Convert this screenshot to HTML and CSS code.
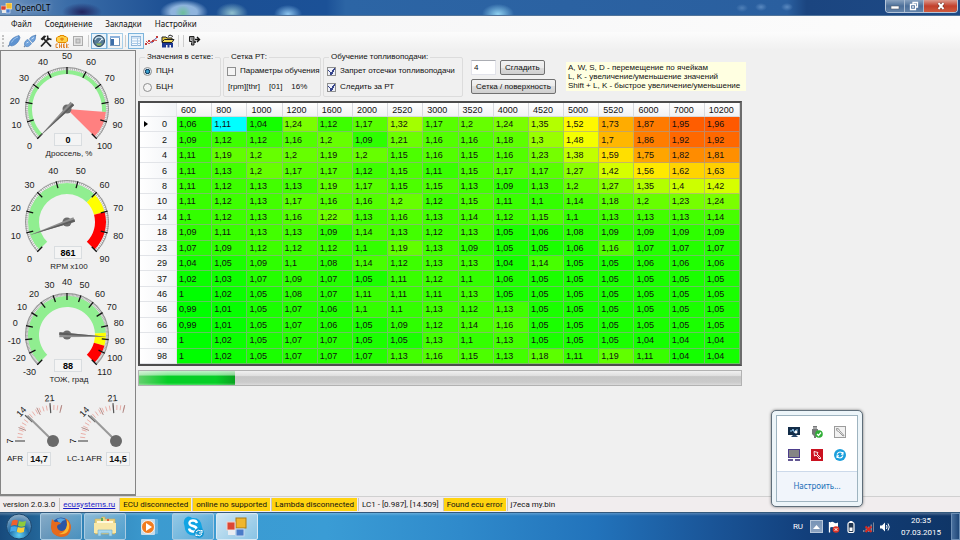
FILE: index.html
```html
<!DOCTYPE html>
<html lang="ru">

<head>
  <meta charset="UTF-8" />
  <meta name="viewport" content="width=device-width, initial-scale=1.0" />
  <title>OpenOLT</title>
  <link rel="stylesheet" href="styles.css">
</head>

<body>
  <header class="titlebar">
    <svg class="app-icon" width="11" height="11" viewBox="0 0 11 11">
      <rect x="5" y="0" width="6" height="6" fill="#f5bd2a" stroke="#fff3c4" stroke-width=".6" />
      <rect x="0" y="3" width="5" height="4" fill="#d8412f" stroke="#f6d5cf" stroke-width=".6" />
      <rect x="5" y="6" width="4" height="4" fill="#4a7fd0" stroke="#dce8fa" stroke-width=".6" />
      <rect x="1" y="7" width="4" height="3" fill="#e8e8e8" />
    </svg>
    <h1>OpenOLT</h1>
    <div class="window-buttons">
      <button type="button" aria-label="Свернуть"><svg width="12" height="10" viewBox="0 0 12 10"><rect x="2" y="5" width="8" height="3" fill="#fff" stroke="#55606e" stroke-width=".6" /></svg></button>
      <button type="button" aria-label="Развернуть"><svg width="10" height="10" viewBox="0 0 10 10"><path d="M4 4V1.500H8.500V6H6.500M1.500 3.500H6.500V8.500H1.500Z" fill="none" stroke="#fff" stroke-width="1.300" /><rect x="3.200" y="5.200" width="1.600" height="1.600" fill="#fff" /></svg></button>
      <button type="button" class="close" aria-label="Закрыть"><svg width="10" height="10" viewBox="0 0 10 10"><path d="M2.500 2L7.500 8M7.500 2L2.500 8" stroke="#5a2a22" stroke-width="3" /><path d="M2.500 2L7.500 8M7.500 2L2.500 8" stroke="#fff" stroke-width="2" /></svg></button>
    </div>
  </header>

  <nav class="menubar">
    <button type="button">Файл</button>
    <button type="button">Соединение</button>
    <button type="button">Закладки</button>
    <button type="button">Настройки</button>
  </nav>

  <div class="toolbar">
    <span class="grip"></span>
    <button type="button" aria-label="Подключить">
      <svg width="14" height="14" viewBox="0 0 14 14"><path d="M1 12.500L3.500 10" stroke="#6b86a8" stroke-width="1.200" /><path d="M2.500 10.500C2 7 6 3 12 1.500L13 3.500C12 8 8 12 4 12Z" fill="#5e93d1" stroke="#4a7ab5" stroke-width=".6" /><path d="M4.500 8.500C6 5.500 8.500 3.800 11 3" stroke="#a4c8ee" fill="none" /></svg>
    </button>
    <button type="button" aria-label="Отключить">
      <svg width="14" height="14" viewBox="0 0 14 14"><path d="M1 13L3 11M11.500 2.500L13 1" stroke="#6b86a8" stroke-width="1.200" /><path d="M1.500 11C1 8 3 6 5 5.500L8.500 9.500C7 12 5 13 3 12.500Z" fill="#6fa2dc" stroke="#4a7ab5" stroke-width=".6" /><path d="M6.500 5C7.500 3 9.500 1.500 12.500 1.500C13 5 11.500 7.500 9.500 8.500Z" fill="#6fa2dc" stroke="#4a7ab5" stroke-width=".6" /><path d="M3.500 9L5.500 8M8.500 5L11 3.500" stroke="#cfe2f7" /></svg>
    </button>
    <button type="button" aria-label="Инструменты">
      <svg width="14" height="14" viewBox="0 0 14 14"><path d="M2 12.500L9.500 4.500M4.500 4.500L12 12.500" stroke="#222" stroke-width="1.800" /><path d="M1.500 5L5 1.500L7.500 2L3.500 6.500Z" fill="#222" /><path d="M8.500 1.500L9 4.500L12.500 5.500M8 4L10 6" stroke="#222" stroke-width="1.500" fill="none" /></svg>
    </button>
    <button type="button" aria-label="Ошибки">
      <svg width="14" height="14" viewBox="0 0 14 14"><path d="M3 2.500H5V1.500H9V2.500H11L12.500 4V7L11 8.500H3L1.500 7V4Z" fill="#ffd24a" stroke="#e58a00" /><path d="M5 5H9M7 3.500V7" stroke="#e07600" /><path d="M1 10V13.500M1 10H3M1 13.500H3M4.500 9.500V14M4.500 12H6.500M6.500 9.500V14M8.500 10V13.500M8.500 10H10M8.500 12H10M8.500 13.500H10M11.500 9.500V14M13.500 10L11.500 12L13.500 14" stroke="#e07a1a" stroke-width=".9" fill="none" /></svg>
    </button>
    <button type="button" aria-label="Остановить">
      <svg width="14" height="14" viewBox="0 0 14 14"><rect x="2.500" y="2.500" width="9" height="9" fill="#e6e6e6" stroke="#ababab" /><rect x="5" y="5" width="4" height="4" fill="#cfcfcf" stroke="#a8a8a8" /></svg>
    </button>
    <span class="sep"></span>
    <button type="button" class="on" aria-label="Приборы">
      <svg width="14" height="14" viewBox="0 0 14 14"><circle cx="7" cy="7" r="5.500" fill="#557a96" stroke="#2b4256" /><path d="M3 6A4.200 4.200 0 0 1 11 6" fill="none" stroke="#c9e0ee" stroke-width="1.300" /><path d="M7 8.500L10 5" stroke="#fff" /><path d="M4 9.500H10L8.500 11.500H5.500Z" fill="#8fb55a" /></svg>
    </button>
    <button type="button" class="framed" aria-label="Панель">
      <svg width="14" height="14" viewBox="0 0 14 14"><rect x="2.500" y="2.500" width="9" height="9" fill="#fff" stroke="#7296bd" /><rect x="2" y="2" width="10" height="2" fill="#8db2dc" /><rect x="3" y="5" width="3" height="6" fill="#3d6ea8" /></svg>
    </button>
    <span class="sep"></span>
    <button type="button" class="on" aria-label="Сетка">
      <svg width="14" height="14" viewBox="0 0 14 14"><rect x="2.500" y="2.500" width="9" height="9" fill="#f5faff" stroke="#8eb4d8" /><path d="M2 4H12M2 7H12M2 9.500H12M8.500 4V12" stroke="#a9c9e6" /></svg>
    </button>
    <button type="button" aria-label="График">
      <svg width="14" height="14" viewBox="0 0 14 14"><path d="M1 10L4 7L7 9L10 5L13 3" stroke="#5b78c8" fill="none" /><path d="M1 7L4 10L8 6L12 6.500" stroke="#d6564e" fill="none" /><path d="M0 9h2v2h-2zM3 6h2v2h-2zM7 6h2v2h-2zM11 2h2v2h-2z" fill="#c23b3b" /></svg>
    </button>
    <button type="button" aria-label="Журнал">
      <svg width="14" height="14" viewBox="0 0 14 14"><path d="M1 8V3H5L6 4H11V6" fill="#e0c63c" stroke="#222" /><path d="M1 8L3.500 5.500H13L11 8.500H1Z" fill="#f2dc5a" stroke="#222" /><path d="M7 2.500L9 1L12 2.500" stroke="#222" fill="none" /><path d="M1 9H12V13.500H10V11H8.500V13.500H6.500V11H5V13.500H1Z" fill="#1c3691" /></svg>
    </button>
    <span class="sep"></span>
    <span class="sep"></span>
    <button type="button" aria-label="Выход">
      <svg width="14" height="14" viewBox="0 0 14 14"><path d="M2.500 2.500H7V11H4.500V8.500M2.500 2.500V7.500H5" stroke="#222" fill="#888" /><path d="M8 5.500H12M10 3L12.500 5.500L10 8M7 8H9" stroke="#111" stroke-width="1.400" fill="none" /></svg>
    </button>
  </div>

  <main class="workspace">
    <aside class="gauges">
      <svg class="gauge" id="throttle" viewBox="0 0 134 113"></svg>
      <svg class="gauge" id="rpm" viewBox="0 0 134 113"></svg>
      <svg class="gauge" id="coolant" viewBox="0 0 134 113"></svg>
      <svg class="afr" id="afr" viewBox="0 0 134 62"></svg>
      <div class="afr-values">
        <span>AFR</span><output>14,7</output>
        <span class="lc">LC-1 AFR</span><output>14,5</output>
      </div>
    </aside>

    <section class="editor">
      <form class="options">
        <fieldset class="values">
          <legend>Значения в сетке:</legend>
          <label><input type="radio" name="mode" checked>ПЦН</label>
          <label><input type="radio" name="mode">БЦН</label>
        </fieldset>
        <fieldset class="point">
          <legend>Сетка РТ:</legend>
          <label><input type="checkbox">Параметры обучения</label>
          <div class="point-info"><span>[rpm][thr]</span><span>[01]</span><span>16%</span></div>
        </fieldset>
        <fieldset class="learning">
          <legend>Обучение топливоподачи:</legend>
          <label><input type="checkbox" checked>Запрет отсечки топливоподачи</label>
          <label><input type="checkbox" checked>Следить за РТ</label>
        </fieldset>
        <div class="smooth">
          <div class="smooth-row">
            <input type="text" value="4" aria-label="Степень сглаживания">
            <button type="button">Сгладить</button>
          </div>
          <button type="button">Сетка / поверхность</button>
        </div>
        <p class="hint">A, W, S, D - перемещение по ячейкам<br>L, K - увеличение/уменьшение значений<br>Shift + L, K - быстрое увеличение/уменьшение</p>
      </form>

      <table class="grid">
        <thead>
          <tr id="gridHead"></tr>
        </thead>
        <tbody id="gridBody"></tbody>
      </table>

      <progress class="load" value="16" max="100" aria-label="Дроссель"></progress>
    </section>
  </main>

  <footer class="statusbar">
    <span>version 2.0.3.0</span>
    <span class="site"><a href="#">ecusystems.ru</a></span>
    <span class="warn">ECU disconnected</span>
    <span class="warn">online no supported</span>
    <span class="warn">Lambda disconnected</span>
    <span>LC1 - [0.987], [14.509]</span>
    <span class="warn">Found ecu error</span>
    <span>j7eca my.bin</span>
  </footer>

  <div class="taskbar">
    <button type="button" class="start" aria-label="Пуск">
      <svg width="28" height="27" viewBox="0 0 28 27">
        <defs>
          <radialGradient id="orb" cx=".5" cy=".85" r=".8">
            <stop offset="0" stop-color="#5fd0f5" />
            <stop offset=".5" stop-color="#1f6ba6" />
            <stop offset="1" stop-color="#89a9c4" />
          </radialGradient>
        </defs>
        <circle cx="14" cy="13.500" r="12.500" fill="url(#orb)" stroke="#1a456c" />
        <path d="M7 8Q10 6 13 7.500L12 12.500Q9 11.500 6 13Z" fill="#f0602c" />
        <path d="M14 8Q17 9.500 21 8L20 13Q16.500 14.500 13 12.800Z" fill="#8ecb3c" />
        <path d="M5.800 14Q9 12.500 12 13.700L11 18.500Q8 17.500 5 19Z" fill="#46a8ea" />
        <path d="M12.800 14Q16 15.500 19.800 14L18.800 19Q15 20.500 11.800 18.800Z" fill="#fccf36" />
      </svg>
    </button>
    <button type="button" class="task open" aria-label="Firefox">
      <svg width="24" height="24" viewBox="0 0 24 24"><circle cx="12" cy="12" r="9.500" fill="#2b56a5" /><path d="M8 4Q13 2 17 5Q13 5 12 8Q9 8 8 4Z" fill="#58a6e0" /><path d="M3 4L6 7Q10 6 12 9Q8 9 8 12Q9 16 13 16Q18 15 18 10Q18 6 16 3Q22 6 22 13Q21 22 12 22Q3 21 2 13Q2 8 3 4Z" fill="#e66a1c" /><path d="M18 5Q22 10 19 16Q16 20 10 19Q17 17 18 10Z" fill="#fbb62e" /></svg>
    </button>
    <button type="button" class="task open" aria-label="Проводник">
      <svg width="26" height="22" viewBox="0 0 26 22"><path d="M3 3H9L10 1H13V3H23V18H3Z" fill="#e9d384" stroke="#c9ac55" stroke-width=".6" /><path d="M5 5H21V14H5Z" fill="#fff9dc" /><path d="M2 7H24V17H2Z" fill="#f8e7a7" /><path d="M6 14H20V20H17V17H9V20H6Z" fill="#a8d7ee" stroke="#6bacd0" stroke-width=".6" /><path d="M9 2H11V5H9Z" fill="#5bab56" /><path d="M15 3H17V5H15Z" fill="#e05b3c" /></svg>
    </button>
    <button type="button" class="task" aria-label="Проигрыватель">
      <svg width="20" height="20" viewBox="0 0 20 20"><rect x="6" y="2" width="13" height="15" rx="1" fill="#78bce4" opacity=".7" /><rect x="2" y="2" width="14" height="16" rx="1" fill="#c4dcec" /><circle cx="9" cy="10" r="6.500" fill="#f07c1f" stroke="#fff" stroke-width=".8" /><path d="M7 6L13 10L7 14Z" fill="#fff" /></svg>
    </button>
    <button type="button" class="task open" aria-label="Skype">
      <svg width="24" height="24" viewBox="0 0 24 24"><path d="M7 1.500Q10 1.500 11 3Q20 2 21 12Q23 16 20 19.500Q17 22 14 20.500Q4 21 3.500 11Q1 4 7 1.500Z" fill="#10a4e4" /><path d="M16 8Q15 5 11.500 5.500Q8 6 8.500 8.500Q9 10.500 12 11Q16 12 15.500 14.500Q14.500 17 11.500 16.500Q8.500 16 8 13.500" fill="none" stroke="#fff" stroke-width="2.400" /><circle cx="18" cy="18" r="5" fill="#1597d4" /><path d="M15 17Q17 14 20 16L21 15V18H18M21 19Q19 22 16 20L15 21V18.500" fill="none" stroke="#fff" /></svg>
    </button>
    <button type="button" class="task active" aria-label="OpenOLT">
      <svg width="22" height="22" viewBox="0 0 22 22"><rect x="10" y="2" width="10" height="10" fill="#f0b62c" stroke="#a97b12" /><rect x="1" y="6" width="8" height="8" fill="#dc4733" stroke="#f4d2cc" /><rect x="2" y="14" width="7" height="5" fill="#e9edf2" /><rect x="10" y="13" width="8" height="7" fill="#4a7bc8" stroke="#c6d8ef" /></svg>
    </button>

    <div class="tray">
      <span class="lang">RU</span>
      <button type="button" class="tray-toggle" aria-label="Скрытые значки"><svg width="7" height="4" viewBox="0 0 7 4"><path d="M0 4L3.500 0L7 4Z" fill="#fff" /></svg></button>
      <svg width="12" height="12" viewBox="0 0 12 12"><path d="M1.500 1V11.500" stroke="#fff" stroke-width="1.300" /><path d="M2 1.500Q4.500 0 6 1.500T10 1.500V6.500Q8 7.500 6 6.500T2 6.500Z" fill="#fff" /><circle cx="8" cy="8.500" r="3.300" fill="#dc3527" /><path d="M6.700 7.200L9.300 9.800M9.300 7.200L6.700 9.800" stroke="#fff" /></svg>
      <svg width="12" height="12" viewBox="0 0 12 12"><rect x="4.500" y="0" width="3" height="2" fill="#fff" /><rect x="3" y="1.500" width="6" height="10" rx="1.500" fill="#203550" stroke="#fff" stroke-width="1.200" /><rect x="4.500" y="6.500" width="3" height="3.500" fill="#fff" /></svg>
      <svg width="12" height="12" viewBox="0 0 12 12"><path d="M1 9h1.500v2h-1.500zM3.500 7.500h1.500v3.500h-1.500zM6 5.500h1.500v5.500h-1.500zM8.500 3.500h1.500v7.500h-1.500zM11 1.500h1v9.500h-1z" fill="#7c8698" /><path d="M3.500 5.500L9.500 11M9.500 5.500L3.500 11" stroke="#d52a22" stroke-width="2" /></svg>
      <svg width="12" height="12" viewBox="0 0 12 12"><path d="M1 4.500H3L6 1.500V10.500L3 7.500H1Z" fill="#fff" /><path d="M7.500 4Q8.500 6 7.500 8M9 2.500Q11.500 6 9 9.500" stroke="#fff" fill="none" /></svg>
      <time class="clock">20:35<br>07.03.2015</time>
      <button type="button" class="show-desktop" aria-label="Показать рабочий стол"></button>
    </div>
  </div>

  <div class="tray-popup">
    <div class="popup-inner">
      <div class="popup-icons">
        <svg width="12" height="12" viewBox="0 0 12 12"><rect x="0" y="1" width="12" height="8" fill="#122c48" /><path d="M2 5H4L5 3L6.500 7L8 4H10" stroke="#8fc9f2" fill="none" /><circle cx="8" cy="6" r="1.500" fill="#fff" /><path d="M3 11L5 9H8L10 11Z" fill="#28486a" /></svg>
        <svg width="12" height="12" viewBox="0 0 12 12"><path d="M2 0H6V3H7V8L5 10V12H3V10L1 8V3H2Z" fill="#77797a" /><path d="M3 1V3M5 1V3" stroke="#fff" stroke-width=".7" /><circle cx="8" cy="8" r="3.800" fill="#2fae35" /><path d="M6 8L7.500 9.500L10 6.500" stroke="#fff" fill="none" stroke-width="1.200" /></svg>
        <svg width="12" height="12" viewBox="0 0 12 12"><rect x=".5" y=".5" width="11" height="11" fill="#f1f1f1" stroke="#9c9c9c" /><path d="M2.500 2.500Q5 2 5.500 4.500L10 9.500L9 10L4.500 5.500Q2 5 2.500 2.500Z" fill="none" stroke="#8b8b8b" stroke-width=".9" /></svg>
        <svg width="12" height="12" viewBox="0 0 12 12"><rect x=".5" y=".5" width="11" height="8" fill="#858585" stroke="#4d3e8c" /><path d="M0 11H5M7 11H12" stroke="#30206f" stroke-width="1.500" /></svg>
        <svg width="12" height="12" viewBox="0 0 12 12"><rect width="12" height="12" fill="#cb1220" /><path d="M3 2.500L7 3.500L6 5L9.500 8.500L8.500 9.500L5 6L3.500 7ZM7.500 9.500H10" fill="none" stroke="#fff" stroke-width=".9" /></svg>
        <svg width="12" height="12" viewBox="0 0 12 12"><circle cx="6" cy="6" r="6" fill="#1c9fdc" /><path d="M3 5.500Q4 3 6 3Q8 3 9 5M9 3V5.200H7M9 6.500Q8 9 6 9Q4 9 3 7M3 9V6.800H5" fill="none" stroke="#fff" stroke-width="1.100" /></svg>
      </div>
      <a href="#" class="popup-link">Настроить...</a>
    </div>
  </div>

  <script src="script.js"></script>
</body>

</html>
```
FILE: styles.css
```css
* {
  box-sizing: border-box;
}

body {
  margin: 0;
  height: 100vh;
  display: flex;
  flex-direction: column;
  overflow: hidden;
  position: relative;
  background: #f0f0f0;
  color: #111;
  font-family: "Liberation Sans", Arial, sans-serif;
  font-size: 8px;
  line-height: 12px;
}

button,
input {
  font: inherit;
  color: inherit;
  margin: 0;
  padding: 0;
}

svg {
  display: block;
  flex: none;
}

/* Title bar */
.titlebar {
  flex: none;
  height: 16px;
  display: flex;
  align-items: flex-start;
  gap: 3px;
  padding-left: 1px;
  border-bottom: 1px solid #51749a;
  background:
    radial-gradient(ellipse 20px 9px at 82px 12px, #20245f, transparent),
    radial-gradient(ellipse 8px 8px at 183px 13px, #6dbf9a, transparent),
    radial-gradient(ellipse 24px 12px at 184px 12px, #8fb4dd 55%, transparent),
    radial-gradient(ellipse 16px 10px at 232px 13px, #8fc0cf, transparent),
    radial-gradient(ellipse 14px 9px at 288px 14px, #8cc4ee, transparent),
    radial-gradient(ellipse 16px 10px at 498px 14px, #8ed0f0, transparent),
    radial-gradient(ellipse 6px 4px at 742px 8px, #4f80b8, transparent),
    radial-gradient(ellipse 6px 4px at 761px 7px, #5a89c0, transparent),
    radial-gradient(ellipse 6px 4px at 787px 7px, #5a89c0, transparent),
    linear-gradient(90deg, #6f93bd, #3b6da8 7%, #1c4f93 18%, #1b5197 34%, #2c65a5 36%, #2a5f9f 82%, #1b4580 84%, #1d4a86);
}

.app-icon {
  margin-top: 3px;
}

.titlebar h1 {
  margin: 0;
  font-family: "Noto Sans", sans-serif;
  font-weight: 400;
  font-size: 8px;
  line-height: 15px;
  color: #000;
  text-shadow: 0 0 4px rgba(255, 255, 255, .6);
}

.window-buttons {
  display: flex;
  margin-left: auto;
  margin-right: 2px;
  border: 1px solid #b5c6da;
  border-top: 0;
  border-radius: 0 0 4px 4px;
  overflow: hidden;
}

.window-buttons button {
  width: 19px;
  height: 12px;
  display: flex;
  align-items: center;
  justify-content: center;
  border: 0;
  border-right: 1px solid #a9bbd0;
  background: linear-gradient(#8aa3c0, #4c6f99 50%, #6484a9);
}

.window-buttons .close {
  width: 33px;
  border-right: 0;
  background: linear-gradient(#dd9a8d, #c2402c 50%, #cf5b3e);
}

/* Menu and toolbar */
.menubar {
  flex: none;
  height: 16px;
  display: flex;
  align-items: center;
  gap: 13px;
  padding-left: 11px;
  background: linear-gradient(90deg, #f4f4f5, #fcfcfc);
}

.menubar button {
  border: 0;
  background: none;
  font-family: "Noto Sans", sans-serif;
}

.toolbar {
  flex: none;
  height: 18px;
  display: flex;
  align-items: center;
  padding-left: 2px;
  background: linear-gradient(#fcfcfc, #f0f0f0);
}

.toolbar button {
  width: 16px;
  height: 16px;
  display: flex;
  align-items: center;
  justify-content: center;
  border: 1px solid transparent;
  background: none;
}

.toolbar .on {
  border-color: #7cb4dc;
  background: #e8f3fb;
}

.toolbar .framed {
  border-color: #a9cfe8;
}

.grip {
  width: 4px;
  height: 12px;
  border-left: 2px dotted #c4c4c4;
}

.sep {
  width: 1px;
  height: 12px;
  margin: 0 2px;
  background: #cdcdcd;
}

/* Gauges on the left */
.workspace {
  flex: 1;
  min-height: 0;
  display: flex;
}

.gauges {
  flex: none;
  width: 136px;
  border: 1px solid #858585;
  border-width: 1px 1px 2px;
  overflow: hidden;
}

.gauges svg {
  width: 100%;
}

.gauge text,
.afr text {
  text-anchor: middle;
  font-size: 9px;
  fill: #222;
}

.gauge .caption {
  font-size: 8px;
}

.gauge .value {
  font-weight: 700;
  fill: #000;
}

.afr-values {
  display: flex;
  align-items: center;
  gap: 4px;
  padding-left: 6px;
}

.afr-values .lc {
  margin-left: 12px;
}

.afr-values output {
  width: 24px;
  height: 14px;
  border: 1px solid #d9dde0;
  background: #f4f4f4;
  font-size: 9px;
  font-weight: 700;
  text-align: center;
}

/* Options above the grid */
.editor {
  flex: 1;
  min-width: 0;
  padding: 0 2px;
}

.options {
  display: flex;
  align-items: flex-start;
  height: 51px;
  padding-top: 1px;
}

fieldset {
  margin: 0 1px;
  padding: 0 3px;
  height: 46px;
  min-width: 0;
  border: 1px solid #dcdcdc;
  border-radius: 2px;
}

.values {
  width: 82px;
}

.point {
  width: 98px;
}

.learning {
  width: 140px;
}

legend {
  padding: 0 2px;
  margin-left: 2px;
  line-height: 12px;
  white-space: nowrap;
}

fieldset label {
  display: flex;
  align-items: center;
  gap: 4px;
  height: 16px;
  white-space: nowrap;
}

.point-info {
  display: flex;
  gap: 9px;
  padding-left: 1px;
  line-height: 16px;
}

input[type="radio"],
input[type="checkbox"] {
  appearance: none;
  flex: none;
  width: 9px;
  height: 9px;
  border: 1px solid #8e8f8f;
  background: #f4f4f4;
}

input[type="radio"] {
  border-radius: 50%;
}

input[type="radio"]:checked {
  background: radial-gradient(circle, #3aa0cf 20%, #17405f 45%, #dfeaf2 60%);
}

input[type="checkbox"]:checked {
  background:
    linear-gradient(50deg, transparent 45%, #35448c 45%, #35448c 60%, transparent 60%) 0 2px / 4px 5px no-repeat,
    linear-gradient(120deg, transparent 42%, #35448c 42%, #35448c 64%, transparent 64%) 2px 0 / 5px 7px no-repeat,
    #eef0f8;
}

.smooth {
  display: flex;
  flex-direction: column;
  align-items: flex-start;
  gap: 4px;
  margin: 9px 10px 0 7px;
}

.smooth-row {
  display: flex;
  gap: 4px;
}

.smooth input {
  width: 25px;
  height: 15px;
  padding: 0 2px;
  border: 1px solid #e2e3ea;
  border-top-color: #abadb3;
  background: #fff;
}

.smooth button {
  height: 15px;
  padding: 0 4px;
  border: 1px solid #707070;
  border-radius: 2px;
  background: linear-gradient(#f2f2f2, #ebebeb 50%, #dddddd 50%, #cfcfcf);
}

.hint {
  width: 180px;
  margin: 11px 0 0;
  padding: 1px 2px;
  background: #ffffe1;
  line-height: 9px;
  white-space: nowrap;
}

/* Correction grid */
.grid {
  width: 100%;
  max-width: 604px;
  height: 265px;
  table-layout: fixed;
  border-collapse: separate;
  border-spacing: 0;
  border: 2px solid #4c4c4c;
  border-right-color: #6c6c6c;
  background: #fff;
  font-size: 9px;
}

.grid th,
.grid td {
  padding: 0 2px;
  border-right: 1px solid rgba(160, 160, 160, .6);
  border-bottom: 1px solid rgba(160, 160, 160, .6);
  font-weight: 400;
  text-align: left;
  line-height: 12px;
  overflow: hidden;
  white-space: nowrap;
}

.grid thead th {
  height: 14px;
  padding: 0 4px;
  border-color: #d8dade;
  background: linear-gradient(#fff, #f1f2f4);
}

.grid .row-head {
  width: 37px;
  padding: 0 9px 0 4px;
  border-color: #e2e4e8;
  background: linear-gradient(90deg, #fff, #f1f3f6);
  text-align: right;
}

.grid .current::before {
  content: "";
  float: left;
  margin-top: 3px;
  border-left: 4px solid #000;
  border-top: 3px solid transparent;
  border-bottom: 3px solid transparent;
}

.load {
  display: block;
  appearance: none;
  width: 100%;
  max-width: 604px;
  height: 16px;
  margin-top: 4px;
  border: 1px solid #b2b2b2;
}

.load::-webkit-progress-bar {
  background: linear-gradient(#f0f0f0, #dedede 35%, #c6c6c6 40%, #cbcbcb 80%, #dadada);
}

.load::-webkit-progress-value {
  background:
    linear-gradient(rgba(255, 255, 255, .75), rgba(255, 255, 255, .5) 30%, transparent 35%, transparent 85%, rgba(255, 255, 255, .3)),
    linear-gradient(90deg, #62cf6c, #06cf26 30%, #06cf26 80%, #0aa320);
}

/* Status bar */
.statusbar {
  flex: none;
  height: 16px;
  display: flex;
  align-items: stretch;
  gap: 1px;
  padding: 1px 0;
  border-top: 1px solid #d0d0d0;
  background: #f1edee;
  font-family: Roboto, sans-serif;
  line-height: 14px;
  white-space: nowrap;
}

.statusbar span {
  padding: 0 3px;
}

.statusbar span + span {
  border-left: 1px solid #c9c5c0;
}

.statusbar .warn {
  background: #ffd30f;
}

.statusbar a {
  color: #1a1ac8;
}

/* Windows taskbar */
.taskbar {
  flex: none;
  height: 28px;
  display: flex;
  align-items: stretch;
  gap: 2px;
  padding-left: 4px;
  border-top: 1px solid #33597c;
  background:
    linear-gradient(rgba(255, 255, 255, .25), transparent 3px),
    linear-gradient(90deg, #174a7c, #2f80b4 8%, #3c9bd0 16%, #3a9cd5 34%, #2f8acb 48%, #2273bb 62%, #1a5598 74%, #123f7b 84%, #0f3566);
}

.taskbar button {
  display: flex;
  align-items: center;
  justify-content: center;
  border: 0;
  background: none;
}

.taskbar .start {
  width: 30px;
  margin-right: 4px;
}

.taskbar .task {
  width: 42px;
  border: 1px solid transparent;
  border-radius: 2px;
}

.taskbar .open {
  border-color: #a9cbe2;
  background: linear-gradient(135deg, rgba(255, 255, 255, .45), rgba(255, 255, 255, .12));
}

.taskbar .active {
  border-color: #d7e9f5;
  background: linear-gradient(135deg, rgba(255, 255, 255, .75), rgba(255, 255, 255, .4));
}

.tray {
  display: flex;
  align-items: center;
  gap: 5px;
  margin-left: auto;
  color: #fff;
  font-family: Roboto, sans-serif;
}

.lang {
  margin-right: 2px;
}

.tray .tray-toggle {
  width: 13px;
  height: 13px;
  border: 1px solid #b6c6da;
  background: linear-gradient(#7893b5, #8ba3c1);
}

.clock {
  width: 50px;
  text-align: center;
}

.tray .show-desktop {
  width: 9px;
  height: 100%;
  border: 1px solid #6d8fb5;
  background: linear-gradient(90deg, #486f9d, #1e4677);
}

/* Hidden tray icons */
.tray-popup {
  position: absolute;
  right: 97px;
  bottom: 33px;
  width: 92px;
  height: 97px;
  padding: 4px;
  border: 1px solid #5f6e7a;
  border-radius: 5px;
  background: #edf5f9;
  box-shadow: 0 0 3px rgba(0, 0, 0, .5);
}

.popup-inner {
  height: 100%;
  display: flex;
  flex-direction: column;
  border: 1px solid #9fb4c0;
  background: #fff;
}

.popup-icons {
  flex: 1;
  display: grid;
  grid-template-columns: repeat(3, 12px);
  gap: 11px;
  place-content: center;
}

.popup-link {
  height: 30px;
  border-top: 1px solid #ccd9ea;
  background: #f1f5fb;
  color: #1a6fb8;
  font-family: "Noto Sans", sans-serif;
  line-height: 28px;
  text-align: center;
  text-decoration: none;
}
```
FILE: script.js
```js
const rpm = [600, 800, 1000, 1200, 1600, 2000, 2520, 3000, 3520, 4000, 4520, 5000, 5520, 6000, 7000, 10200];

const rows = {
  0: '1,06 1,11 1,04 1,24 1,12 1,17 1,32 1,17 1,2 1,24 1,35 1,52 1,73 1,87 1,95 1,96',
  2: '1,09 1,12 1,12 1,16 1,2 1,09 1,21 1,16 1,16 1,18 1,3 1,48 1,7 1,86 1,92 1,92',
  4: '1,11 1,19 1,2 1,2 1,19 1,2 1,15 1,16 1,15 1,16 1,23 1,38 1,59 1,75 1,82 1,81',
  6: '1,11 1,13 1,2 1,17 1,17 1,12 1,15 1,11 1,15 1,17 1,17 1,27 1,42 1,56 1,62 1,63',
  8: '1,11 1,12 1,13 1,13 1,19 1,17 1,15 1,15 1,13 1,09 1,13 1,2 1,27 1,35 1,4 1,42',
  10: '1,11 1,12 1,13 1,17 1,16 1,16 1,2 1,12 1,15 1,11 1,1 1,14 1,18 1,2 1,23 1,24',
  14: '1,1 1,12 1,13 1,16 1,22 1,13 1,16 1,13 1,14 1,12 1,15 1,1 1,13 1,13 1,13 1,14',
  18: '1,09 1,11 1,13 1,13 1,09 1,14 1,13 1,12 1,13 1,05 1,06 1,08 1,09 1,09 1,09 1,09',
  23: '1,07 1,09 1,12 1,12 1,12 1,1 1,19 1,13 1,09 1,05 1,05 1,06 1,16 1,07 1,07 1,07',
  29: '1,04 1,05 1,09 1,1 1,08 1,14 1,12 1,13 1,13 1,04 1,14 1,05 1,05 1,06 1,06 1,06',
  37: '1,02 1,03 1,07 1,09 1,07 1,05 1,11 1,12 1,1 1,06 1,05 1,05 1,05 1,05 1,05 1,05',
  46: '1 1,02 1,05 1,08 1,07 1,11 1,11 1,11 1,13 1,05 1,05 1,05 1,05 1,05 1,05 1,05',
  56: '0,99 1,01 1,05 1,07 1,06 1,1 1,1 1,13 1,12 1,13 1,05 1,05 1,05 1,05 1,05 1,05',
  66: '0,99 1,01 1,05 1,07 1,06 1,05 1,09 1,12 1,14 1,16 1,05 1,05 1,05 1,05 1,05 1,05',
  80: '1 1,02 1,05 1,07 1,07 1,05 1,05 1,13 1,1 1,13 1,05 1,05 1,05 1,04 1,04 1,04',
  98: '1 1,02 1,05 1,07 1,07 1,07 1,13 1,16 1,15 1,13 1,18 1,11 1,19 1,11 1,04 1,04'
};

// green -> yellow at 1.5, then yellow -> red
function cellColor(v) {
  const r = Math.max(0, Math.min(255, Math.round((v - 1) * 510)));
  const g = v > 1.5 ? Math.round(255 - (v - 1.5) * 360) : 255;
  return `rgb(${r}, ${g}, 0)`;
}

document.getElementById('gridHead').innerHTML =
  '<th class="row-head"></th>' + rpm.map(v => `<th scope="col">${v}</th>`).join('');

document.getElementById('gridBody').innerHTML = Object.keys(rows).map((thr, i) => {
  const cells = rows[thr].split(' ').map((t, j) => {
    const color = i === 0 && j === 1 ? '#00ffff' : cellColor(parseFloat(t.replace(',', '.')));
    return `<td style="background:${color}">${t}</td>`;
  }).join('');
  return `<tr><th scope="row" class="row-head${i === 0 ? ' current' : ''}">${thr}</th>${cells}</tr>`;
}).join('');

// angle in degrees, 0 is up, clockwise
function pt(cx, cy, r, deg) {
  const a = deg * Math.PI / 180;
  return [(cx + r * Math.sin(a)).toFixed(2), (cy - r * Math.cos(a)).toFixed(2)];
}

function line(cx, cy, r1, r2, deg, color, width) {
  const [x1, y1] = pt(cx, cy, r1, deg);
  const [x2, y2] = pt(cx, cy, r2, deg);
  return `<line x1="${x1}" y1="${y1}" x2="${x2}" y2="${y2}" stroke="${color}" stroke-width="${width}"/>`;
}

function band(cx, cy, r1, r2, a1, a2, color) {
  const big = a2 - a1 > 180 ? 1 : 0;
  return `<path d="M${pt(cx, cy, r2, a1)}A${r2} ${r2} 0 ${big} 1 ${pt(cx, cy, r2, a2)}` +
    `L${pt(cx, cy, r1, a2)}A${r1} ${r1} 0 ${big} 0 ${pt(cx, cy, r1, a1)}Z" fill="${color}"/>`;
}

function drawGauge(id, g) {
  const cx = 66, cy = 58;
  const angle = v => -135 + (v - g.min) / (g.max - g.min) * 270;
  let out = '';
  g.bands.forEach(b => out += band(cx, cy, b[3], 39, angle(b[0]), angle(b[1]), b[2]));
  out += band(cx, cy, 41, 42, -135, 135, '#9a9a9a');
  for (let v = g.min; v <= g.max; v++) out += line(cx, cy, 39, 42, angle(v), '#8c8c8c', 0.6);
  for (let v = g.min; v <= g.max; v += 10) {
    out += line(cx, cy, 35, 42, angle(v), '#111', 1.3);
    const [x, y] = pt(cx, cy, 53, angle(v));
    out += `<text x="${x}" y="${+y + 3}">${v}</text>`;
  }
  const a = angle(g.value);
  out += `<circle cx="${cx}" cy="${cy}" r="4.5" fill="#6b6b6b"/>`;
  out += `<polygon points="${pt(cx, cy, 40, a)} ${pt(cx, cy, 8, a + 162)} ${pt(cx, cy, 8, a + 198)}" fill="#8f8f8f"/>`;
  out += `<polygon points="${pt(cx, cy, 40, a)} ${pt(cx, cy, 8, a + 180)} ${pt(cx, cy, 8, a + 198)}" fill="#5c5c5c"/>`;
  out += `<rect x="53.5" y="82.5" width="27" height="12" fill="#f4f4f4" stroke="#d9dde0"/>`;
  out += `<text class="value" x="67" y="92">${g.text}</text>`;
  out += `<text class="caption" x="68" y="105">${g.caption}</text>`;
  document.getElementById(id).innerHTML = out;
}

drawGauge('throttle', {
  min: 0, max: 100, value: 0, text: '0', caption: 'Дроссель, %',
  bands: [[0, 85, '#90ee90', 35], [85, 100, '#ff8080', 0]]
});
drawGauge('rpm', {
  min: 0, max: 90, value: 8.61, text: '861', caption: 'RPM x100',
  bands: [[0, 60, '#90ee90', 28], [60, 70, '#ffff00', 28], [70, 90, '#ff0000', 28]]
});
drawGauge('coolant', {
  min: -30, max: 110, value: 88, text: '88', caption: 'ТОЖ, град',
  bands: [[-30, 85, '#90ee90', 28], [85, 95, '#ffff00', 28], [95, 110, '#ff0000', 28]]
});

function smallGauge(cx, value) {
  const cy = 51;
  const angle = v => -90 + (v - 7) * 6.1;
  let out = '';
  for (let v = 8; v <= 24; v++) out += line(cx, cy, 31, 36, angle(v), '#e8a79f', 0.9);
  [10.5, 17.5, 24].forEach(v => out += line(cx, cy, 29, 37, angle(v), '#b08a86', 1));
  [7, 14, 21].forEach(v => {
    out += line(cx, cy, 28, 38, angle(v), '#555', 1.2);
    const [x, y] = pt(cx, cy, 43, angle(v));
    out += `<text transform="translate(${x} ${y}) rotate(${angle(v)})" y="3">${v}</text>`;
  });
  out += line(cx, cy, 0, 36, angle(value), '#999', 2);
  out += `<circle cx="${cx}" cy="${cy}" r="6" fill="#696969"/>`;
  return out;
}

document.getElementById('afr').innerHTML = smallGauge(52, 14.3) + smallGauge(115, 14.3);
```
